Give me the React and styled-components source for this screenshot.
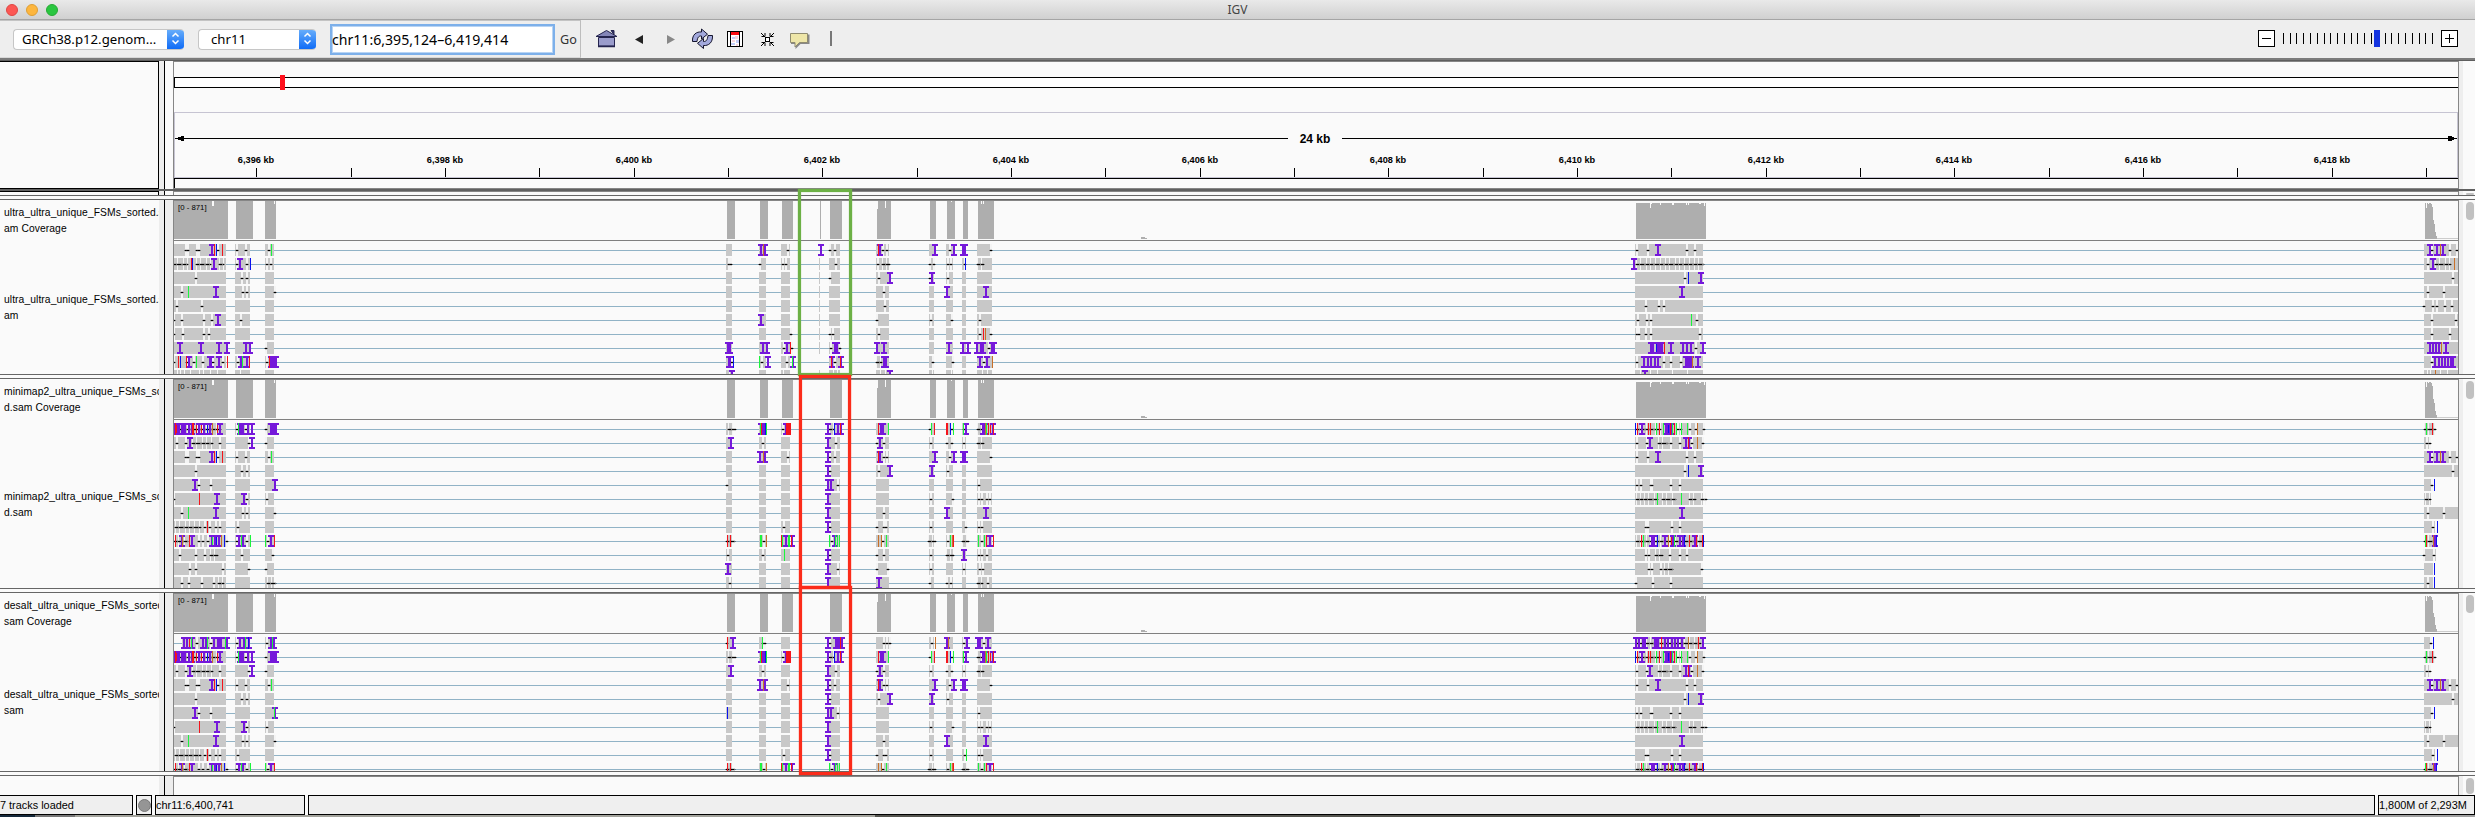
import React from 'react';
import styled, { createGlobalStyle } from 'styled-components';

const Global = createGlobalStyle`
  * { box-sizing: border-box; }
  body { margin: 0; background: #fafafa; }
  svg { display: block; }
`;

const SANS = '"Liberation Sans", Arial, sans-serif';
const UI = '"Noto Sans", "Open Sans", sans-serif';

/* ---------- window and toolbar ---------- */

const Window = styled.div`
  position: relative;
  width: 2475px;
  height: 817px;
  overflow: hidden;
  display: flex;
  flex-direction: column;
  font-family: ${SANS};
  color: #000;
`;
const TitleBar = styled.div`
  flex: none;
  height: 20px;
  display: grid;
  grid-template-columns: 1fr auto 1fr;
  align-items: center;
  background: linear-gradient(#e9e9e9, #d0d0d0);
  border-bottom: 1px solid #a5a5a5;
  font: 12px ${UI};
  color: #444;
`;
const Lights = styled.div`
  display: flex;
  gap: 8px;
  padding-left: 6px;
`;
const Light = styled.i`
  width: 12px;
  height: 12px;
  border-radius: 50%;
  background: ${(p) => p.$c};
  border: 1px solid ${(p) => p.$b};
`;
const Toolbar = styled.div`
  flex: none;
  height: 38px;
  display: flex;
  background: #eee;
  font-family: ${UI};
`;
const Locus = styled.div`
  width: 581px;
  display: flex;
  align-items: center;
  border-top: 1px solid #c4c4c4;
  border-right: 1px solid #bdbdbd;
  border-bottom: 1px solid #d8d8d8;
  padding-left: 13px;
`;
const Combo = styled.div`
  width: ${(p) => p.$w}px;
  height: 21px;
  margin-right: 14px;
  display: flex;
  align-items: center;
  justify-content: space-between;
  background: #fff;
  border: 1px solid #c6c6c6;
  border-right: 0;
  border-radius: 4px;
  padding-left: ${(p) => p.$pad}px;
  font-size: 13.2px;
  line-height: 19px;
  white-space: nowrap;
  overflow: hidden;
`;
const Stepper = styled.span`
  width: 17px;
  height: 21px;
  flex: none;
  background: linear-gradient(#6bb0fb, #0a68f6);
`;
const LocusInput = styled.div`
  width: 225px;
  height: 31px;
  margin-right: 5px;
  background: #fff;
  border: 2px solid #7db0ea;
  box-shadow: inset 0 0 0 1px #b8d4f4;
  font-size: 14.1px;
  line-height: 27px;
  white-space: nowrap;
`;
const Go = styled.span`
  font-size: 12.6px;
  color: #333;
`;
const Icons = styled.div`
  display: flex;
  align-items: center;
  padding-left: 14px;
  flex: 1;
`;
const Zoomer = styled.div`
  width: 217px;
  display: flex;
  align-items: center;
`;
const Rule = styled.div`
  flex: none;
  height: 3px;
  background: #7b7b7b;
  border-bottom: 1px solid #5e5e5e;
`;

/* ---------- panels ---------- */

const Row = styled.div`
  flex: none;
  height: ${(p) => p.$h}px;
  display: flex;
  background: #fafafa;
`;
const Names = styled.div`
  width: 159px;
  overflow: hidden;
  white-space: nowrap;
  padding: ${(p) => p.$top || 0}px 0 0 4px;
  font-size: 10.3px;
  letter-spacing: 0.08px;
  line-height: 16px;
  border: ${(p) => (p.$boxed ? '1px solid #000' : '0')};
  border-left: 0;
  ${(p) => p.$open && 'border-bottom: 0;'}
`;
const NameBlock = styled.div`
  height: ${(p) => p.$h}px;
`;
const Gutter = styled.div`
  width: 14px;
  display: flex;
  background: ${(p) => (p.$light ? '#fafafa' : '#ededed')};
  border-left: 5px solid #ededed;
  &::before { content: ''; width: 1px; background: #000; }
`;
const Canvas = styled.div`
  width: 2286px;
  border: 1px solid #868686;
  border-bottom: 0;
  background: #fafafa;
  overflow: hidden;
`;
const ScrollLane = styled.div`
  flex: 1;
  border-left: 4px solid #eee;
  padding: 2px 0 0 3px;
`;
const Thumb = styled.div`
  width: 8px;
  height: ${(p) => p.$h}px;
  border-radius: 4px;
  background: #c1c1c1;
`;
const Splitter = styled.div`
  flex: none;
  height: 5px;
  background: #fafafa;
  border-top: 1px solid #666;
  border-bottom: 1px solid #666;
`;
const DarkSplit = styled.div`
  flex: none;
  height: 2px;
  background: #606060;
`;
const Highlight = styled.div`
  position: absolute;
  left: ${(p) => p.$x}px;
  top: ${(p) => p.$y}px;
  width: ${(p) => p.$w}px;
  height: ${(p) => p.$h}px;
  border: 3px solid ${(p) => p.$c};
  box-shadow: 0 0 1px ${(p) => p.$c}, inset 0 0 1px ${(p) => p.$c};
`;

/* ---------- status bar ---------- */

const Status = styled.div`
  flex: none;
  height: 20px;
  display: flex;
  gap: 3px;
  background: #fafafa;
`;
const Cell = styled.div`
  width: ${(p) => p.$w}px;
  flex: ${(p) => (p.$grow ? 1 : 'none')};
  background: #efefef;
  border: 1px solid #000;
  border-left-width: ${(p) => (p.$open ? 0 : 1)}px;
  font-size: 10.9px;
  line-height: 18px;
  white-space: nowrap;
  overflow: hidden;
  display: flex;
  align-items: center;
  justify-content: ${(p) => (p.$mid ? 'center' : 'flex-start')};
`;
const Lamp = styled.i`
  width: 13px;
  height: 13px;
  border-radius: 50%;
  background: #959595;
  border: 1px solid #777;
`;
const Desktop = styled.div`
  flex: 1;
  background: linear-gradient(90deg, #14283a 0 35px, #777 35px 75px, #a3a39c 75px 875px, #55554f 875px 1920px, #a0a0a0 1920px);
`;

/* ---------- alignment data ----------
   Each exon cluster has an origin; marks are given in thirds of a pixel from it.
   d deletion, i insertion, p insertion block, r/g/b/o base mismatches. */

const ORIGIN = { A: 0, M: 700, G: 1600, H: 2390 };
const COLORS = { r: '#f5141c', g: '#1bf53c', b: '#0a12f0', o: '#c87028' };
const PURPLE = '#7518da';

const EXONS = [
  [174, 226], [235, 250], [265, 274], [726, 732], [759, 766], [781, 790], [829, 840],
  [876, 889], [929, 934], [946, 953], [962, 966], [977, 992], [1635, 1703],
];

const shared = {
  a: {
    A: 'd558 d564 d592 d598 i636 r643 b649 d653 r667 d710 d738 d808 g814',
    G: 'd110 d144 i174 d261 d284',
    H: 'd125 i119 i142 i158 o151 d179 d202',
  },
  b: { A: 'd588 d726 d741', G: 'd256 b265 i303', H: 'd189' },
  c: { A: 'd545 g565 i648 d729 d742 d824', G: 'i246', H: 'd114 d163' },
};

const ULTRA = [
  { ...shared.a, M: 'i182 i194 o190 d264 i363 d391 d405 i539 r535 d550 d561 i705 d749 i762 i789 i795 d872' },
  {
    A: 'd522-562 r574 b577 d590-630 i642 d660-670 d712 i720 d740 b751 d800 d812',
    M: 'd88 d94 d180 d249 d258 d407 d533 d550-568 d690 d703 d744 d753 d796 b796 d834-848',
    G: 'd111-310 i102', H: 'd115 i128 d138-180 o193', thin: 1,
  },
  { ...shared.b, M: 'd390 d536 i570 i696 d690 d744', thin: 1 },
  { ...shared.c, M: 'd552 i741 i858', thin: 1 },
  { A: 'd532 d607', M: 'd555', G: 'd138 d177 d192', H: 'd103 d130 d142 d165 d187', thin: 1 },
  { A: 'd523 d545 d611 d637 i653 d722', M: 'i182 d530 d693 d755 d841', G: 'd114 d141 d154 g274 d291', H: 'd126 d197', thin: 1 },
  { A: 'd523 d550 d612 d628', M: 'd273 d391 d399 d538 d839 r850 o856 d872', G: 'd110 d116 d138 d152 d299', H: 'd127 d181', thin: 1 },
  {
    A: 'i540 i603 i657 i681 i738 i750 d797',
    M: 'i84 i90 i189 i201 d252 i261 r271 d275 d392 i405 i411 d420 i531 i552 i748 i790 i803 i830 i843 i849 d866 i876 i881',
    G: 'i153 i160 b169 p171-189 r193 i212 i249 i260 i273 d288 i309',
    H: 'i121 i130 i139 i148 o155 i167', thin: 1,
  },
  {
    A: 'd523 r536 b541 d560 i566 r558 d582 g589 d609 i629 i633 d640 i657 d670 r682 d714 i723 i742 g727 r748 d800 p810-831 r808',
    M: 'i87 i91 d97 b100 g179 d185 i204 d260 i279 g278 i396 r395 d405 i424 r421 d530-544 i552 i558 d699 d758 i840 d851 i861 o877',
    G: 'd110 i132 i143 i154 i165 i175 d193 d213 d242 i258 p259-275 o277 i293',
    H: 'd125 i135 i146 i155 i164 i173 i182 i188',
  },
  {
    A: 'w530 w540 w552 w570 w596 w608 w630 w651 w720', M: 'i96 i570 w86 w249 w400 w410 w540 w556 w695 w752 w845 w860',
    G: 'i135 w120 w150 w170 w215 w260', H: 'w110 w120 o136 w150 w170', thin: 1,
  },
];

const MINIMAP = [
  {
    A: 'd522-660 p522-533 r525 r530 i537 p542-557 i566 i577 r577 r581 r588 i596 r603 i612 b622 i630 o637 r652 i660 d712 i719 p720-731 g715 d737 i743 i755 d797 p810-831',
    M: 'd86-104 p180-196 r183 g180 b196 g199 d248 i258 r260-275 i384 d391-399 i413 b403 i424 r421 i542 i550 r535 g565 d690 g694 r703 d755 r738-743 b751 g760 d791 i799 g791 d833-842 i848 p845-858 o857 r866 g860 r872 i878 r881',
    G: 'd110-180 i126 b106 r112 r146 r151 g169 r178 i199 p196-210 g191 b206 i214 r210 r222 g216 g228 d233 d244 g244 g262 d270 d287 o292 d312',
    H: 'd104-134 g109 r127', end: 2434,
  },
  {
    A: 'd531 d557 i570 d578-636 d661 d748 i756 d799', M: 'i93 d189 i384 d408 d530 i540 d552 d692 d742 d756 d791 d833-849',
    G: 'd112 d141 i150 d176-200 d213 d240 i257 i268 r265 d277 o292 d310', H: 'd110 d120', end: 2431,
  },
  { ...shared.a, M: 'i181 i194 o190 d264 i384 d391 d405 i541 r535 d552 d561 i705 d749 i762 i789 i795 d872' },
  { ...shared.b, M: 'i384 d390 d536 i570 i696 d744' },
  { A: 'i585 d598 d633 i825', M: 'd81 i384 i394 d414 d838', G: 'd110 d124 d152 d156 d213 d241', H: 'd125 b133', end: 2433 },
  {
    A: 'd523 r598 i651 i732 d742 d802', M: 'i384 d693 d758 d838 d847 d860 d870',
    G: 'd110-125 d135-170 g172 d190-224 g244 d270-286 d305-318', H: 'd108-120', end: 2431,
  },
  { ...shared.c, M: 'i384 d552 i741 i858' },
  { A: 'd528-600 d616 r622 d630 d647 d660 d713', M: 'd253 i384 d391 d530 d552 d558 d694 d797 d837 d847', G: 'd138 d145 d215 d240', H: 'd129 b142', end: 2435 },
  {
    A: 'd526-562 r526 i545 o547 i576 r568 d597 d610 d623 i635 g637 i646 b649 i657 o664 b673 d680 d710 i716 i728 g725 d740 g751 g796 d803 i812 r823',
    M: 'd80-103 r82 r91 g181-186 d193 o199 i258 r245 g248 g264 i275 r273 g269 d396 i404 g388 g406 g413 g418 d550 o535 o544 g560 d688-706 d744 g751 o757 r760 d789-804 g834 d845 g854 r859 i870 r881',
    G: 'd112-308 r124 g130 i156 i162 b172 i194 o206 r214 i219 g223 i241 i248 b253 r268 i284 r290 r307 b310',
    H: 'd104-126 i134 r109 g105 o131 b139', end: 2436,
  },
  { A: 'd541 d588 d614 d632-650 d726 d820', M: 'd83 d189 g253 i384 d391 d530 d552 d693 d741-758 i792 d836 d845 d862', G: 'd138 d148 d168-186 d210 d240 d261', H: 'd103 d132', end: 2436 },
  { A: 'd569 d589 d668 d748 d799', M: 'i84 i384 d414 d530 d563 d692 d791 d840 d848', G: 'd147 d156 d182 d195-217 d305', H: 'b133', end: 2433 },
  { A: 'd547 d567 d606 d641 d656-668 d804-824', M: 'd91 i384 i537 d690 d742 d752 d833-845 d863', G: 'd108 d158 d213', H: 'd114 b133', end: 2433 },
];

const DESALT = [
  {
    A: 'i553 i560 r567 i577 g573 d590 i609 i617 g622 d632 i641 p652-665 i680 g676 d711 i719 i731 g737 i748 b746 d801 i814 i823 g818',
    M: 'd81 r82 i99 d188 g187 d194 i384 d390 i409 p408-419 i426 r421 d552 d560 d570 d695 o706 i741 o744 d791 i801 i834 i841 d851 i864',
    G: 'd110-300 i107 i117 i128 i135 i164 p162-178 r185 i195 i205 i215 i225 i235 i246 o265 r295 i308',
    H: 'd123 b130', end: 2431, from: 182,
  },
  ...MINIMAP.slice(0, 4),
  { ...MINIMAP[4], A: 'i585 d598 d633 i825 g823', M: 'b82 i384 i394 d414 d838' },
  ...MINIMAP.slice(5, 7),
  { ...MINIMAP[7], M: 'd253 i384 d391 d530 d552 d558 d694 d794 g799 d837 d847' },
  MINIMAP[8],
];

function deletion(key, x0, x1, y, run) {
  const gaps = [];
  const dashes = [];
  if (run) {
    for (let x = x0, n = 0; x < x1; n += 1) {
      const dash = Math.min(n % 3 === 1 ? 4 : 3, x1 - x);
      gaps.push(`M${x} ${y}h1v12h-1z`);
      dashes.push(`M${x} ${y + 6}h${dash}v1h-${dash}z`);
      x += dash + (n % 2 ? 2 : 1);
    }
  } else {
    gaps.push(`M${x0} ${y}h2v12h-2z`);
    dashes.push(`M${x0} ${y + 6}h2v1h-2z`);
  }
  return (
    <g key={key}>
      <path d={gaps.join('')} fill="#f4f4f4" />
      <rect x={x0 - 1} y={y + 6} width={x1 - x0 + 2} height="1" fill="#333" opacity=".5" />
      <rect x={x0} y={y + 5} width={x1 - x0} height="3" fill="#555" opacity=".25" />
      <path d={dashes.join('')} fill="#000" />
    </g>
  );
}

function marks(row, y) {
  const under = [];
  const over = [];
  Object.keys(ORIGIN).forEach((region) => {
    (row[region] || '').split(' ').filter(Boolean).forEach((token, n) => {
      const kind = token[0];
      const [a, b] = token.slice(1).split('-').map(Number);
      const o = ORIGIN[region];
      const key = region + n;
      if (kind === 'w') {
        under.push(<rect key={key} x={o + Math.round(a / 3)} y={y} width="1" height="12" fill="#fafafa" />);
      } else if (kind === 'd') {
        under.push(deletion(key, o + Math.round(a / 3) - 1, o + Math.round((b || a) / 3) + 1, y, Boolean(b)));
      } else if (kind === 'i') {
        const x = o + Math.round(a / 3);
        over.push(<path key={key} d={`M${x - 3} ${y}h6v2h-2v8h2v2h-6v-2h2v-8h-2z`} fill={PURPLE} />);
      } else if (kind === 'p') {
        const x0 = o + Math.round(a / 3);
        const x1 = o + Math.round(b / 3);
        over.push(<path key={key} d={`M${x0} ${y}H${x1}V${y + 12}H${x0}zM${x0 - 2} ${y}H${x1 + 2}v2H${x0 - 2}zM${x0 - 2} ${y + 10}H${x1 + 2}v2H${x0 - 2}z`} fill={PURPLE} />);
      } else {
        const x0 = o + Math.floor(a / 3);
        over.push(<rect key={key} x={x0} y={y} width={b ? Math.round((b - a) / 3) : 1} height="12" fill={COLORS[kind]} />);
      }
    });
  });
  return [...under, ...over];
}

function Reads({ row, y }) {
  const from = row.from || 174;
  return (
    <g>
      <rect x="174" y={y + 6} width="2250" height="1" fill="#91b3c6" />
      {EXONS.map(([a, b]) => {
        const start = a === 174 ? from : a;
        return <rect key={a} x={start} y={y} width={b - start} height="12" fill="#c8c8c8" />;
      })}
      {row.thin && <rect x="819" y={y} width="1" height="12" fill="#c8c8c8" />}
      <rect x="2424" y={y} width={(row.end || 2458) - 2424} height="12" fill="#c8c8c8" />
      {marks(row, y)}
    </g>
  );
}

const COVERAGE = [
  [174, 228], [236, 253], [265, 276], [727, 735], [760, 768], [782, 793], [830, 842],
  [878, 891], [930, 936], [947, 955], [963, 968], [978, 994],
];

function Coverage({ y, thin }) {
  return (
    <g fill="#aeaeae">
      {COVERAGE.map(([a, b]) => <rect key={a} x={a} y={y} width={b - a} height="38" />)}
      <rect x="877" y={y + 8} width="1" height="30" />
      {thin && <rect x="820" y={y} width="1" height="38" />}
      <path d={`M1141 ${y + 36}h4v1h2v1h-6z`} />
      <path d={`M1636 ${y + 2}h70v36h-70z`} />
      <path d={`M2425 ${y + 38}v-36h1v5h1v-5h1v1h1v-1h2v1h1v3h1v13h1v4h1v8h1v4h1v3z`} />
      <rect x="2437" y={y + 37} width="21" height="1" opacity=".6" />
      <g fill="#fafafa">
        <rect x="212" y={y} width="2" height="5" />
        <rect x="274" y={y} width="1" height="3" />
        <rect x="885" y={y} width="1" height="7" />
        <rect x="951" y={y} width="1" height="1" />
        <rect x="981" y={y} width="1" height="3" />
        <rect x="983" y={y} width="1" height="3" />
        <rect x="1650" y={y + 2} width="1" height="5" />
        <rect x="1651" y={y + 2} width="1" height="1" />
        <rect x="1660" y={y + 2} width="1" height="2" />
        <rect x="1672" y={y + 2} width="2" height="2" />
        <rect x="1686" y={y + 2} width="1" height="2" />
        <rect x="1688" y={y + 2} width="1" height="2" />
        <rect x="1699" y={y + 2} width="2" height="1" />
        <rect x="1704" y={y + 2} width="1" height="3" />
      </g>
      <text x="178" y={y + 9} fontFamily={SANS} fontSize="7.8" fill="#000">[0 - 871]</text>
    </g>
  );
}

function TrackPanel({ top, bottom, rows, names, split, thin }) {
  const h = bottom - top;
  return (
    <Row $h={h + 1}>
      <Names $top={5}>
        <NameBlock $h={split}>{names[0]}<br />{names[1]} Coverage</NameBlock>
        <NameBlock $h={34}>{names[0]}<br />{names[1]}</NameBlock>
      </Names>
      <Gutter />
      <Canvas>
        <svg width="2284" height={h} viewBox={`174 ${top} 2284 ${h}`} shapeRendering="crispEdges">
          <Coverage y={top} thin={thin} />
          <rect x="174" y={top + 39} width="2284" height="1" fill="#808080" />
          {rows.map((row, n) => <Reads key={n} row={row} y={top + 43 + n * 14} />)}
        </svg>
      </Canvas>
      <ScrollLane><Thumb $h={18} /></ScrollLane>
    </Row>
  );
}

function Ruler() {
  const ticks = Array.from({ length: 24 }, (_, n) => 6396 + n);
  return (
    <svg width="2284" height="127" viewBox="174 62 2284 127" shapeRendering="crispEdges">
      <path d="M174.500 77.500H2459V87.500H174.500z" fill="#fff" stroke="#000" />
      <rect x="280" y="75" width="5" height="15" fill="#ff101c" />
      <path d="M174.500 178V112.500H2457.500V178M174 177.500H2458" fill="none" stroke="#c6c4d2" />
      <path d="M175 138.500H1288M1342 138.500H2457" stroke="#000" />
      <path d="M175 138h3v-1h3v-1h3v5h-3v-1h-3v-1h-3zM2457 138h-3v-1h-2v-1h-4v5h4v-1h2v-1h3z" />
      <text x="1315" y="143" textAnchor="middle" fontFamily={SANS} fontWeight="700" fontSize="12">24 kb</text>
      {ticks.map((kb) => {
        const x = Math.floor(634.1 + (kb - 6400) * 94.33);
        return (
          <g key={kb}>
            <rect x={x} y="168" width="1" height="9" />
            {kb % 2 === 0 && (
              <text x={x} y="163" textAnchor="middle" fontFamily={SANS} fontWeight="700" fontSize="9.2">
                {`6,${kb - 6000} kb`}
              </text>
            )}
          </g>
        );
      })}
      <path d="M174 178.500H2458M174.500 178V188" stroke="#000" fill="none" />
      <path d="M174 188.500H2458" stroke="#868686" />
    </svg>
  );
}

/* ---------- toolbar drawings ---------- */

const Arrows = () => (
  <Stepper>
    <svg width="17" height="19" viewBox="0 0 17 19" fill="none" stroke="#fff" strokeWidth="1.5">
      <path d="M5.5 7.5l3-3 3 3M5.5 11.5l3 3 3-3" />
    </svg>
  </Stepper>
);

const ToolIcons = () => (
  <svg width="240" height="38" viewBox="595 20 240 38">
    <g stroke="#24244e" strokeWidth="1">
      <path d="M598.5 37.5h16v8.5h-16z" fill="#9a9ccb" />
      <path d="M596 36.500l10.500-6L617 36.500z" fill="#8486b8" />
      <path d="M611 30.500h3v4z" fill="#34346a" />
      <path d="M598 46.500h17" strokeWidth="1.500" />
    </g>
    <path d="M635 39.500l8-4.500v9z" fill="#222" />
    <path d="M675 39.500l-8-4.500v9z" fill="#888" />
    <g fill="#a3a9dc" stroke="#15152e" strokeWidth="1" strokeLinejoin="round">
      <path d="M692.500 41.500c-.5-7 4-10 9-9.500v-3l6 5.200-6 4.800v-3c-2.500-.3-4 1-4.500 5.500z" />
      <path d="M712.500 35.500c.5 7-4 10.500-9 10v3l-6-5.200 6-4.800v3c2.500.3 4-1.500 4.500-6z" />
    </g>
    <g shapeRendering="crispEdges">
      <rect x="727.500" y="31.500" width="15" height="15" fill="#fff" stroke="#000" />
      <path d="M730.500 31v16M739.500 31v16" stroke="#000" />
      <rect x="731" y="32" width="8" height="3" fill="#fb0d12" />
      <path d="M732 37h3v2h-3zM736 40h3v3h-3zM731 43h4v2h-4z" fill="#c3cdf8" />
      <path d="M735 36h3v3h-3zM732 40h3v2h-3zM736 44h2v2h-2z" fill="#f8d4dc" />
    </g>
    <g stroke="#000" fill="none">
      <rect x="765.500" y="37.500" width="4" height="4" fill="#fff" />
      <path d="M761 33l4 4M774 33l-4 4M761 46l4-4M774 46l-4-4M761.500 36.500h3.500v-3.500M773.500 36.500h-3.500v-3.500M761.500 42.500h3.500v3.500M773.500 42.500h-3.500v3.500" />
    </g>
    <path d="M791 34.500h18.500v9.500h-9l-5 5v-5h-4.500z" fill="#888" />
    <path d="M790.500 33.500h17v9h-8l-4.500 4.500v-4.500h-4.500z" fill="#eee6a8" stroke="#8f8b70" />
    <rect x="830" y="31" width="2" height="15" fill="#777" />
  </svg>
);

const ZOOM_TICKS = [250, 272, 290, 310, 331, 352, 373, 391, 412, 433, 454, 473, 493, 515, 556, 575, 595, 616, 637, 658, 676, 697];

const ZoomSlider = () => (
  <svg width="200" height="38" viewBox="2258 20 200 38" shapeRendering="crispEdges">
    <g fill="#fff" stroke="#000">
      <rect x="2258.500" y="30.500" width="16" height="16" />
      <rect x="2441.500" y="30.500" width="16" height="16" />
      <path d="M2262 38.500h9M2445 38.500h9M2449.500 34v9" />
    </g>
    {ZOOM_TICKS.map((t) => <rect key={t} x={2200 + Math.floor(t / 3)} y="33" width="1" height="11" />)}
    <rect x="2374" y="30" width="6" height="17" fill="#1434e0" />
  </svg>
);

export default function App() {
  return (
    <Window>
      <Global />
      <TitleBar>
        <Lights>
          <Light $c="#fc5753" $b="#df4744" />
          <Light $c="#fdb63e" $b="#de9f34" />
          <Light $c="#2ac640" $b="#27aa35" />
        </Lights>
        <span>IGV</span>
      </TitleBar>
      <Toolbar>
        <Locus>
          <Combo $w={171} $pad={8}>GRCh38.p12.genom...<Arrows /></Combo>
          <Combo $w={118} $pad={12}>chr11<Arrows /></Combo>
          <LocusInput>chr11:6,395,124–6,419,414</LocusInput>
          <Go>Go</Go>
        </Locus>
        <Icons><ToolIcons /></Icons>
        <Zoomer><ZoomSlider /></Zoomer>
      </Toolbar>
      <Rule />
      <Row $h={128}>
        <Names $boxed />
        <Gutter $light />
        <Canvas><Ruler /></Canvas>
        <ScrollLane />
      </Row>
      <DarkSplit />
      <Row $h={4}>
        <Names $boxed $open />
        <Gutter $light />
        <Canvas />
        <ScrollLane><Thumb $h={2} /></ScrollLane>
      </Row>
      <Splitter />
      <TrackPanel top={201} bottom={374} rows={ULTRA} names={['ultra_ultra_unique_FSMs_sorted.s', 'am']} split={87} thin />
      <Splitter />
      <TrackPanel top={380} bottom={588} rows={MINIMAP} names={['minimap2_ultra_unique_FSMs_sorte', 'd.sam']} split={105} />
      <Splitter />
      <TrackPanel top={594} bottom={771} rows={DESALT} names={['desalt_ultra_unique_FSMs_sorted.', 'sam']} split={89} />
      <Splitter />
      <Row $h={19}>
        <Names />
        <Gutter />
        <Canvas />
        <ScrollLane><Thumb $h={16} /></ScrollLane>
      </Row>
      <Status>
        <Cell $w={133} $open>7 tracks loaded</Cell>
        <Cell $w={16} $mid><Lamp /></Cell>
        <Cell $w={150}>chr11:6,400,741</Cell>
        <Cell $grow />
        <Cell $w={97}>1,800M of 2,293M</Cell>
      </Status>
      <Desktop />
      <Highlight $x={798} $y={189} $w={54} $h={187} $c="#6cb045" />
      <Highlight $x={799} $y={375} $w={52} $h={214} $c="#fb2b1a" />
      <Highlight $x={799} $y={586} $w={53} $h={189} $c="#fb2b1a" />
    </Window>
  );
}
